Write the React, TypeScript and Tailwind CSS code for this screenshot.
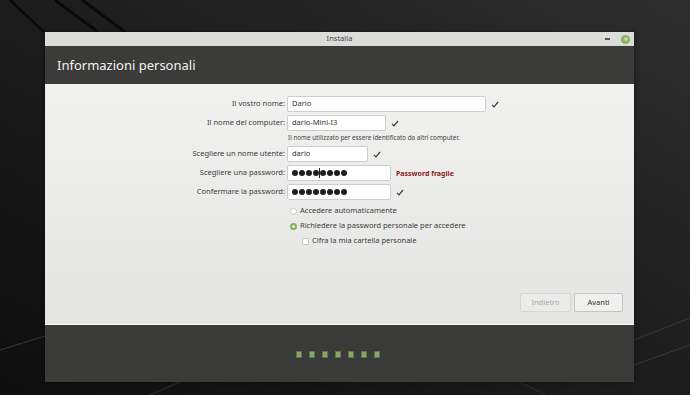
import React from 'react';

const font = { fontFamily: '"Noto Sans", "DejaVu Sans", sans-serif' };

function Check() {
  return (
    <svg width="8" height="7" viewBox="0 0 8 7" className="shrink-0">
      <path d="M1 3.8 L3 5.8 L7 1" fill="none" stroke="#3a3a3a" strokeWidth="1.2" />
    </svg>
  );
}

function Dots({ cursor }: { cursor?: boolean }) {
  return (
    <div className="flex items-center gap-[1px]">
      {Array.from({ length: 8 }).map((_, i) => (
        <React.Fragment key={i}>
          {cursor && i === 4 && <div className="w-[1px] h-[10px] bg-[#222] -mx-[1px]" />}
          <div className="w-[6px] h-[6px] rounded-full bg-[#1e1e1e]" />
        </React.Fragment>
      ))}
    </div>
  );
}

function Row({ label, children }: { label: string; children: React.ReactNode }) {
  return (
    <div className="flex items-center h-[16px]">
      <div className="w-[242px] pr-[2px] text-right text-[7.5px] text-[#3c3c3c] leading-none">{label}</div>
      <div className="flex items-center gap-[5px]">{children}</div>
    </div>
  );
}

function Input({ w, children }: { w: string; children: React.ReactNode }) {
  return (
    <div className={`${w} h-[16px] bg-white border border-[#cdcdcd] rounded-[2px] flex items-center px-[4px] text-[7.5px] text-[#333]`}>
      {children}
    </div>
  );
}

export default function App() {
  return (
    <div className="relative w-[690px] h-[395px] overflow-hidden bg-[#151515]" style={font}>
      <svg className="absolute inset-0" width="690" height="395">
        <defs>
          <linearGradient id="bg" x1="0" y1="1" x2="1" y2="0">
            <stop offset="0" stopColor="#0e0e0e" />
            <stop offset="0.5" stopColor="#1c1c1c" />
            <stop offset="1" stopColor="#2e2e2e" />
          </linearGradient>
        </defs>
        <rect width="690" height="395" fill="url(#bg)" />
        <path d="M55 0 L98 32 M82 0 L125 32 M10 0 L44 32" stroke="#0a0a0a" strokeWidth="3" />
        <path d="M634 340 L690 318 M634 365 L690 345 M0 350 L45 336" stroke="#3a3a3a" strokeWidth="1" />
        <path d="M180 382 L150 395 M520 382 L545 395" stroke="#262626" strokeWidth="1.5" />
      </svg>

      <div className="relative pt-[32px] pl-[45px]">
        <div className="w-[589px] flex flex-col shadow-[0_0_4px_rgba(0,0,0,0.5)]">
          {/* title bar */}
          <div className="h-[14px] bg-[#dcdcdb] flex items-center relative">
            <div className="flex-1 text-center text-[7.5px] text-[#444] leading-none">Installa</div>
            <div className="absolute right-[4px] top-0 h-full flex items-center gap-[11px]">
              <div className="w-[5px] h-[1.5px] bg-[#555]" />
              <div className="w-[9px] h-[9px] rounded-full bg-[#8db262] flex items-center justify-center">
                <div className="w-[4px] h-[4px] rounded-full bg-[#c4d9a8]" />
              </div>
            </div>
          </div>
          {/* header */}
          <div className="h-[38px] bg-[#3b3b3a] flex items-center pl-[12px]">
            <div className="text-[13px] text-[#f2f2f2] leading-none">Informazioni personali</div>
          </div>
          {/* content */}
          <div className="h-[241px] bg-gradient-to-b from-[#f1f1f0] to-[#e4e4e3] border-b border-[#f7f7f7] flex flex-col pt-[12px]">
            <Row label="Il vostro nome:">
              <Input w="w-[199px]">Dario</Input>
              <Check />
            </Row>
            <div className="mt-[3px]">
              <Row label="Il nome del computer:">
                <Input w="w-[99px]">dario-Mini-I3</Input>
                <Check />
              </Row>
            </div>
            <div className="pl-[243px] mt-[3px] text-[6.3px] text-[#444] leading-[8px]">
              Il nome utilizzato per essere identificato da altri computer.
            </div>
            <div className="mt-[4px]">
              <Row label="Scegliere un nome utente:">
                <Input w="w-[81px]">dario</Input>
                <Check />
              </Row>
            </div>
            <div className="mt-[3px]">
              <Row label="Scegliere una password:">
                <Input w="w-[104px]"><Dots cursor /></Input>
                <div className="text-[7px] font-bold text-[#8c1c1c] leading-none">Password fragile</div>
              </Row>
            </div>
            <div className="mt-[3px]">
              <Row label="Confermare la password:">
                <Input w="w-[104px]"><Dots /></Input>
                <Check />
              </Row>
            </div>
            <div className="pl-[245px] mt-[5px] flex flex-col gap-[3px] text-[7.5px] text-[#3c3c3c] leading-none">
              <div className="h-[12px] flex items-center gap-[3px]">
                <div className="w-[7px] h-[7px] rounded-full bg-white border border-[#c8c8c8]" />
                <span>Accedere automaticamente</span>
              </div>
              <div className="h-[12px] flex items-center gap-[3px]">
                <div className="w-[7px] h-[7px] rounded-full bg-[#85ac5a] flex items-center justify-center">
                  <div className="w-[3px] h-[3px] rounded-full bg-[#eef4e6]" />
                </div>
                <span>Richiedere la password personale per accedere</span>
              </div>
              <div className="h-[12px] flex items-center gap-[3px] pl-[12px]">
                <div className="w-[7px] h-[7px] rounded-[1px] bg-white border border-[#c8c8c8]" />
                <span>Cifra la mia cartella personale</span>
              </div>
            </div>
            <div className="flex-1" />
            <div className="flex justify-end gap-[3px] pr-[11px] pb-[12px]">
              <div className="w-[51px] h-[19px] rounded-[2px] border border-[#d6d6d6] bg-[#ebebea] flex items-center justify-center text-[7.5px] text-[#aaa]">
                Indietro
              </div>
              <div className="w-[49px] h-[19px] rounded-[2px] border border-[#c4c4c4] bg-[#f0f0ef] flex items-center justify-center text-[7.5px] text-[#333]">
                Avanti
              </div>
            </div>
          </div>
          {/* footer */}
          <div className="h-[57px] bg-[#3a3a39] flex items-center pl-[251px]">
            <div className="flex gap-[7px] mt-[1px]">
              {Array.from({ length: 7 }).map((_, i) => (
                <div key={i} className="w-[6px] h-[7px] bg-[#8aa36d] border border-[#5f7548]" />
              ))}
            </div>
          </div>
        </div>
      </div>
    </div>
  );
}
